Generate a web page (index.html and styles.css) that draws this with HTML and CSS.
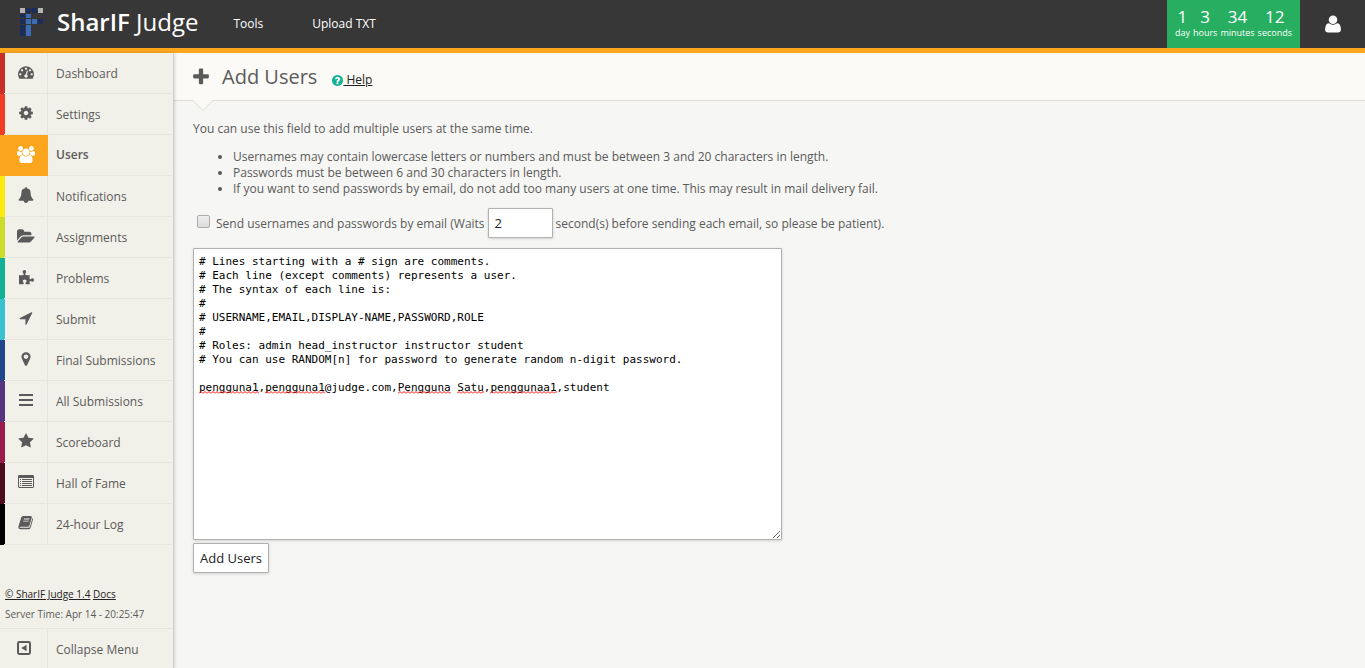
FILE: index.html
```html
<!DOCTYPE html>
<html lang="en">
<head>
<meta charset="utf-8">
<title>Add Users - SharIF Judge</title>
<link rel="stylesheet" href="styles.css">
</head>
<body>
<header class="topbar">
  <a class="brand" href="#">
    <svg class="logo" viewBox="0 0 24 28" aria-hidden="true">
      <path fill="#b5b5b5" d="M0 0h5v5H0zM18 0h5v5h-5z"/>
      <path fill="#1c2c5b" d="M6 0h5v5H6zM12 0h5v5h-5zM0 6h5v4H0zM0 11h5v5H0zM18 11h5v5h-5zM0 17h5v11H0z"/>
      <path fill="#3c6db5" d="M6 6h5v4H6zM6 11h5v5H6zM12 11h5v5h-5zM6 17h5v11H6z"/>
    </svg>
    <span class="brand-name"><b>SharIF</b> Judge</span>
  </a>
  <nav class="top-nav">
    <a href="#">Tools</a>
    <a href="#">Upload TXT</a>
  </nav>
  <div class="timer">
    <div><span class="num">1</span><span class="unit">day</span></div>
    <div><span class="num">3</span><span class="unit">hours</span></div>
    <div><span class="num">34</span><span class="unit">minutes</span></div>
    <div><span class="num">12</span><span class="unit">seconds</span></div>
  </div>
  <button class="profile" type="button" aria-label="Profile">
    <svg viewBox="0 0 1792 1792" aria-hidden="true"><path d="M1600 1405q0 120-73 189.500t-194 69.500h-874q-121 0-194-69.500t-73-189.500q0-53 3.500-103.500t14-109 26.500-108.500 43-97.500 62-81 85.500-53.500 111.500-20q9 0 42 21.500t74.500 48 108 48 133.500 21.500 133.500-21.500 108-48 74.500-48 42-21.500q61 0 111.500 20t85.500 53.500 62 81 43 97.500 26.500 108.500 14 109 3.500 103.500zm-320-893q0 159-112.500 271.500t-271.500 112.500-271.500-112.500-112.500-271.500 112.500-271.500 271.500-112.500 271.500 112.500 112.500 271.500z"/></svg>
  </button>
</header>
<div class="layout">
  <aside class="sidebar">
    <nav class="menu">
      <a class="item red" href="#"><span class="icon"><svg viewBox="0 0 1792 1792"><path d="M384 1152q0-53-37.500-90.500t-90.500-37.500-90.500 37.500-37.500 90.500 37.500 90.500 90.500 37.500 90.500-37.500 37.500-90.500zm192-448q0-53-37.500-90.500t-90.500-37.500-90.500 37.500-37.500 90.500 37.500 90.500 90.500 37.500 90.500-37.500 37.500-90.500zm428 481l101-382q6-26-7.500-48.500t-38.500-29.500-48 6.500-30 39.500l-101 382q-60 5-107 43.500t-63 98.500q-20 77 20 146t117 89 146-20 89-117q16-60-6-117t-72-91zm660-33q0-53-37.500-90.500t-90.500-37.500-90.500 37.500-37.500 90.500 37.500 90.500 90.500 37.500 90.500-37.500 37.500-90.500zm-640-640q0-53-37.500-90.500t-90.500-37.500-90.500 37.500-37.500 90.500 37.500 90.500 90.500 37.500 90.500-37.500 37.500-90.500zm448 192q0-53-37.500-90.500t-90.500-37.500-90.500 37.500-37.500 90.500 37.500 90.500 90.500 37.500 90.500-37.500 37.500-90.500zm320 448q0 261-141 483-19 29-54 29h-1402q-35 0-54-29-141-221-141-483 0-182 71-348t191-286 286-191 348-71 348 71 286 191 191 286 71 348z"/></svg></span><span class="label">Dashboard</span></a>
      <a class="item scarlet" href="#"><span class="icon"><svg viewBox="0 0 1792 1792"><path d="M1152 896q0-106-75-181t-181-75-181 75-75 181 75 181 181 75 181-75 75-181zm512-109v222q0 12-8 23t-20 13l-185 28q-19 54-39 91 35 50 107 138 10 12 10 25t-9 23q-27 37-99 108t-94 71q-12 0-26-9l-138-108q-44 23-91 38-16 136-29 186-7 28-36 28h-222q-14 0-24.500-8.500t-11.500-21.500l-28-184q-49-16-90-37l-141 107q-10 9-25 9-14 0-25-11-126-114-165-168-7-10-7-23 0-12 8-23 15-21 51-66.500t54-70.500q-27-50-41-99l-183-27q-13-2-21-12.500t-8-23.500v-222q0-12 8-23t19-13l186-28q14-46 39-92-40-57-107-138-10-12-10-24 0-10 9-23 26-36 98.500-107.500t94.500-71.500q13 0 26 10l138 107q44-23 91-38 16-136 29-186 7-28 36-28h222q14 0 24.500 8.500t11.500 21.500l28 184q49 16 90 37l142-107q9-9 24-9 13 0 25 10 129 119 165 170 7 8 7 22 0 12-8 23-15 21-51 66.500t-54 70.500q26 50 41 98l183 28q13 2 21 12.500t8 23.500z"/></svg></span><span class="label">Settings</span></a>
      <a class="item orange active" href="#" aria-current="page"><span class="icon"><svg class="wide" viewBox="0 0 1920 1792"><path d="M593 896q-162 5-265 128h-134q-82 0-138-40.500t-56-118.500q0-353 124-353 6 0 43.500 21t97.500 42.500 119 21.500q67 0 133-23-5 37-5 66 0 159 81 256zm1071 637q0 120-73 189.500t-194 69.500h-874q-121 0-194-69.500t-73-189.500q0-53 3.500-103.500t14-109 26.500-108.500 43-97.500 62-81 85.500-53.500 111.500-20q10 0 43 21.500t73 48 107 48 135 21.500 135-21.500 107-48 73-48 43-21.500q61 0 111.500 20t85.500 53.500 62 81 43 97.500 26.500 108.500 14 109 3.500 103.500zm-1024-1277q0 106-75 181t-181 75-181-75-75-181 75-181 181-75 181 75 75 181zm704 384q0 159-112.500 271.500t-271.500 112.500-271.500-112.500-112.500-271.500 112.500-271.500 271.500-112.500 271.500 112.500 112.500 271.500zm576 225q0 78-56 118.500t-138 40.500h-134q-103-123-265-128 93-134 93-256 0-29-5-66 66 23 133 23 59 0 119-21.500t97.500-42.500 43.500-21q124 0 124 353zm-128-609q0 106-75 181t-181 75-181-75-75-181 75-181 181-75 181 75 75 181z"/></svg></span><span class="label">Users</span></a>
      <a class="item yellow" href="#"><span class="icon"><svg viewBox="0 0 1792 1792"><path d="M1728 1408q0 52-38 90t-90 38h-448q0 106-75 181t-181 75-181-75-75-181h-448q-52 0-90-38t-38-90q50-42 91-88t85-119.500 74.500-158.500 50-206 19.500-260q0-152 117-282.500t307-158.500q-8-19-8-39 0-40 28-68t68-28 68 28 28 68q0 20-8 39 190 28 307 158.500t117 282.500q0 139 19.500 260t50 206 74.500 158.500 85 119.500 91 88z"/></svg></span><span class="label">Notifications</span></a>
      <a class="item lime" href="#"><span class="icon"><svg class="wide" viewBox="0 0 1920 1792"><path d="M1879 952q0 31-31 66l-336 396q-43 51-120.500 86.500t-143.500 35.500h-1088q-34 0-60.500-13t-26.500-43q0-31 31-66l336-396q43-51 120.500-86.500t143.500-35.500h1088q34 0 60.500 13t26.500 43zm-343-344v160h-832q-94 0-197 47.500t-164 119.500l-337 396-6 6v-985q0-92 66-158t158-66h320q92 0 158 66t66 158v32h544q92 0 158 66t66 158z"/></svg></span><span class="label">Assignments</span></a>
      <a class="item green" href="#"><span class="icon"><svg viewBox="0 0 16 16"><path d="M1 6q2 .6 4 .2Q6 6 5.500 4.700 4.600 3.700 4.600 2.600 4.600.900 6.400.900t1.800 1.700q0 .9-.8 2-.4 1.200.5 1.500 1.900.3 3.800-.1-.3 2-.1 3.500.2 1.100 1.300.5.800-.7 1.600-.7 1.500 0 1.500 1.700t-1.500 1.700q-.8 0-1.600-.7-1-.4-1.200.5-.3 1 .1 2.800H8.300q-.8 0-.8-.8 0-.6.600-1.200.5-.6.500-1.200 0-1.500-1.900-1.500t-1.900 1.500q0 .8.600 1.500.5.500.4 1-.1.600-1 .700H1z"/></svg></span><span class="label">Problems</span></a>
      <a class="item sky" href="#"><span class="icon"><svg viewBox="0 0 1792 1792"><path d="M1593 349l-640 1280q-17 35-57 35-5 0-15-2-22-5-35.500-22.500t-13.500-39.500v-576h-576q-22 0-39.500-13.500t-22.500-35.500 4-42 29-30l1280-640q13-7 29-7 27 0 45 19 15 14 18.500 34.500t-6.500 39.500z"/></svg></span><span class="label">Submit</span></a>
      <a class="item blue" href="#"><span class="icon"><svg viewBox="0 0 1792 1792"><path d="M1152 640q0-106-75-181t-181-75-181 75-75 181 75 181 181 75 181-75 75-181zm256 0q0 109-33 179l-364 774q-16 33-47.500 52t-67.500 19-67.500-19-46.500-52l-365-774q-33-70-33-179 0-212 150-362t362-150 362 150 150 362z"/></svg></span><span class="label">Final Submissions</span></a>
      <a class="item purple" href="#"><span class="icon"><svg viewBox="0 0 16 16"><path d="M1 2h14v2H1zM1 7h14v2H1zM1 12h14v2H1z"/></svg></span><span class="label">All Submissions</span></a>
      <a class="item crimson" href="#"><span class="icon"><svg viewBox="0 0 1792 1792"><path d="M1728 647q0 22-26 48l-363 354 86 500q1 7 1 20 0 21-10.500 35.500t-30.500 14.500q-19 0-40-12l-449-236-449 236q-22 12-40 12-21 0-31.500-14.500t-10.500-35.500q0-6 2-20l86-500-364-354q-25-27-25-48 0-37 56-46l502-73 225-455q19-41 49-41t49 41l225 455 502 73q56 9 56 46z"/></svg></span><span class="label">Scoreboard</span></a>
      <a class="item maroon" href="#"><span class="icon"><svg viewBox="0 0 16 16"><path fill-rule="evenodd" d="M1.400 1h13.200Q16 1 16 2.400v10.200q0 1.400-1.400 1.400H1.400Q0 14 0 12.600V2.400Q0 1 1.400 1zM1 4v8.600q0 .4.400.4h13.200q.4 0 .4-.4V4zM2 5h1v1H2zM4 5h10v1H4zM2 7h1v1H2zM4 7h10v1H4zM2 9h1v1H2zM4 9h10v1H4zM2 11h1v1H2zM4 11h10v1H4z"/></svg></span><span class="label">Hall of Fame</span></a>
      <a class="item black" href="#"><span class="icon"><svg viewBox="0 0 16 16"><path fill-rule="evenodd" d="M5.200 1h7.700q1.200.1.900 1.400l-2.400 8.100q-.4 1.200-1.500 1.200H2.300q-.9 0-.7.600.2.500 1 .500h8.300q.7 0 .9-.7l2.500-8.300q.1-.4.100-.7.900.5.600 1.500l-2.400 8.200q-.5 1.500-1.900 1.500H2.400Q1 14.300.5 13q-.3-.9 0-1.800L3.200 2.500Q3.800 1.100 5.200 1zM6 3.500l-.3.900h5.600l.3-.9zM5.300 5.700l-.3.900h5.600l.3-.9z"/></svg></span><span class="label">24-hour Log</span></a>
    </nav>
    <div class="side-foot">
      <p class="about"><a href="#">© SharIF Judge 1.4</a> <a href="#">Docs</a></p>
      <p class="about">Server Time: Apr 14 - 20:25:47</p>
      <button class="item collapse" type="button"><span class="icon"><svg viewBox="0 0 16 16"><path fill-rule="evenodd" d="M3.400 1h9.200q2.400 0 2.400 2.400v9.200q0 2.400-2.400 2.400H3.400Q1 15 1 12.600V3.400Q1 1 3.400 1zM3.500 3q-.5 0-.5.500v9q0 .5.500.5h9q.5 0 .5-.5v-9q0-.5-.5-.5zM10.600 4.700v6.600L5.300 8z"/></svg></span><span class="label">Collapse Menu</span></button>
    </div>
  </aside>
  <main class="main">
    <div class="page-head">
      <svg class="plus" viewBox="0 0 1792 1792" aria-hidden="true"><path d="M1600 736v192q0 40-28 68t-68 28h-416v416q0 40-28 68t-68 28h-192q-40 0-68-28t-28-68v-416h-416q-40 0-68-28t-28-68v-192q0-40 28-68t68-28h416v-416q0-40 28-68t68-28h192q40 0 68 28t28 68v416h416q40 0 68 28t28 68z"/></svg>
      <h1>Add Users</h1>
      <a class="help" href="#"><svg viewBox="128 128 1536 1536" aria-hidden="true"><path d="M1024 1376v-192q0-14-9-23t-23-9h-192q-14 0-23 9t-9 23v192q0 14 9 23t23 9h192q14 0 23-9t9-23zm256-672q0-88-55.500-163t-138.500-116-170-41q-243 0-371 213-15 24 8 42l132 100q7 6 19 6 16 0 25-12 53-68 86-92 34-24 86-24 48 0 85.500 26t37.500 59q0 38-20 61t-68 45q-63 28-115.500 86.500t-52.500 125.500v36q0 14 9 23t23 9h192q14 0 23-9t9-23q0-19 21.500-49.500t54.500-49.500q32-18 49-28.500t46-35 44.500-48 28-60.500 12.500-81zm384 192q0 209-103 385.500t-279.500 279.500-385.500 103-385.500-103-279.500-279.500-103-385.500 103-385.500 279.500-279.500 385.500-103 385.500 103 279.500 279.500 103 385.500z"/></svg> Help</a>
      <svg class="notch" viewBox="0 0 20 11" aria-hidden="true"><path fill="#fbfaf6" d="M0 0h20L10 10z"/><path fill="none" stroke="#deddd5" d="M0 .5l10 10 10-10"/></svg>
    </div>
    <form class="content">
      <p class="intro">You can use this field to add multiple users at the same time.</p>
      <ul class="notes">
        <li>Usernames may contain lowercase letters or numbers and must be between 3 and 20 characters in length.</li>
        <li>Passwords must be between 6 and 30 characters in length.</li>
        <li>If you want to send passwords by email, do not add too many users at one time. This may result in mail delivery fail.</li>
      </ul>
      <div class="mail-row">
        <input type="checkbox" id="send-mail" class="check">
        <label for="send-mail">Send usernames and passwords by email (Waits</label>
        <input type="text" id="delay" class="field delay" value="2">
        <label for="delay">second(s) before sending each email, so please be patient).</label>
      </div>
      <div class="editor">
        <textarea class="field" aria-label="New users" spellcheck="false">
# Lines starting with a # sign are comments.
# Each line (except comments) represents a user.
# The syntax of each line is:
#
# USERNAME,EMAIL,DISPLAY-NAME,PASSWORD,ROLE
#
# Roles: admin head_instructor instructor student
# You can use RANDOM[n] for password to generate random n-digit password.

pengguna1,pengguna1@judge.com,Pengguna Satu,penggunaa1,student</textarea>
        <div class="spelling" aria-hidden="true"><i class="w9"></i><i class="w9"></i><i class="w8"></i><i class="w4"></i><i class="w10"></i></div>
      </div>
      <button class="field submit" type="submit">Add Users</button>
    </form>
  </main>
</div>
</body>
</html>
```

FILE: styles.css
```css
* { box-sizing: border-box; }

body {
  margin: 0;
  min-height: 100vh;
  display: flex;
  flex-direction: column;
  background: #f6f6f4;
  color: #5a5a5a;
  font: 12px/16px "Open Sans", sans-serif;
}

a { color: inherit; }
p, ul, h1 { margin: 0; }
svg { display: block; fill: currentColor; }
button, input, textarea { font: inherit; color: inherit; }

.topbar {
  display: flex;
  flex: none;
  height: 53px;
  background: #373737;
  border-bottom: 5px solid #fca61e;
  color: #fff;
}
.topbar a { text-decoration: none; }
.brand {
  display: flex;
  align-items: center;
  gap: 13px;
  padding-left: 20px;
}
.logo { width: 24px; height: 28px; margin-bottom: 4px; }
.brand-name { font-size: 24px; line-height: 32px; margin-bottom: 4px; }
.brand-name b { font-weight: 600; }
.top-nav {
  display: flex;
  align-items: center;
  gap: 49px;
  padding-left: 35px;
}
.timer {
  display: flex;
  gap: 3px;
  margin-left: auto;
  padding: 7px 8px 0;
  background: #27ae60;
  text-align: center;
}
.timer span { display: block; }
.num { font-size: 17px; line-height: 20px; }
.unit { font-size: 9px; line-height: 12px; }
.profile {
  width: 65px;
  border: 0;
  padding: 0;
  background: none;
  display: flex;
  align-items: center;
  justify-content: center;
}
.profile svg { width: 20px; height: 20px; }

.layout { display: flex; flex: 1; }

.sidebar {
  display: flex;
  flex-direction: column;
  flex: none;
  width: 174px;
  background: #f2f1e9;
  border-right: 1px solid #cfcfcb;
  box-shadow: 1px 0 3px rgba(0, 0, 0, .15);
  z-index: 1;
}
.menu { padding-right: 1px; }
.item {
  display: flex;
  height: 41px;
  border: 0 solid #e7e6dc;
  border-bottom-width: 1px;
  text-decoration: none;
}
.icon {
  display: flex;
  align-items: center;
  justify-content: center;
  width: 48px;
  padding: 0 0 2px 5px;
  border-right: 1px solid #e7e6dc;
  box-shadow: inset 5px 0 var(--strip);
}
.icon svg { width: 16px; height: 16px; }
.icon .wide { width: 18px; height: 17px; }
.menu .item {
  border-image: linear-gradient(to right, var(--strip) 5px, #e7e6dc 5px) 1;
}
.label { padding: 13px 0 0 8px; font-size: 12px; }
.active .icon {
  background: #fca61e;
  border-color: #fca61e;
  color: #fff;
  box-shadow: 0 1px #fca61e;
}
.active .label { padding-top: 12px; font-weight: 600; }

.red { --strip: #c72f29; }
.scarlet { --strip: #f03c24; }
.orange { --strip: #fca61e; }
.yellow { --strip: #fbe80c; }
.lime { --strip: #cddb2a; }
.green { --strip: #11b295; }
.sky { --strip: #39c2cf; }
.blue { --strip: #21468b; }
.purple { --strip: #573480; }
.crimson { --strip: #9b1b4c; }
.maroon { --strip: #4e0b1c; }
.black { --strip: #000; }

.side-foot { margin-top: auto; }
.about { padding-left: 5px; font-size: 10px; line-height: 20px; }
.about a { color: #222; }
.collapse {
  width: 100%;
  height: 40px;
  margin-top: 4px;
  padding: 0;
  border-width: 1px 0 0;
  background: none;
  text-align: left;
}
.collapse .icon { padding-left: 0; box-shadow: none; }

.main { flex: 1; min-width: 0; }
.page-head {
  position: relative;
  display: flex;
  align-items: center;
  height: 48px;
  padding-left: 17px;
  background: #fbfaf6;
  border-bottom: 1px solid #deddd5;
}
.plus { width: 20px; height: 20px; }
h1 { margin-left: 11px; font-size: 20px; line-height: 28px; font-weight: 400; }
.help { margin: 6px 0 0 15px; color: #222; }
.help svg {
  display: inline-block;
  width: 11px;
  height: 11px;
  vertical-align: -2px;
  color: #11b295;
}
.notch {
  position: absolute;
  left: 19px;
  top: 47px;
  width: 20px;
  height: 11px;
}

.content { padding: 20px 19px 0; }
.notes { margin-top: 12px; padding-left: 40px; }
.mail-row { display: flex; align-items: center; gap: 3px; margin-top: 11px; }
.mail-row label { padding-top: 1px; }
.check {
  appearance: none;
  width: 13px;
  height: 13px;
  margin: 0 3px 4px 4px;
  border: 1px solid #adadad;
  border-radius: 2px;
  background: linear-gradient(#eee, #dcdcdc);
}
.field {
  border: 1px solid #b0b0b0;
  border-radius: 1px;
  background: #fff;
  color: #222;
  box-shadow: 0 1px 3px rgba(0, 0, 0, .15);
}
.delay { width: 65px; height: 30px; padding: 0 6px; font-size: 13px; }
.editor { position: relative; margin-top: 10px; }
textarea {
  display: block;
  width: 589px;
  max-width: 100%;
  height: 292px;
  padding: 6px 5px 5px;
}
textarea.field { color: #000; }
textarea, .spelling { font: 11px/14px "DejaVu Sans Mono", monospace; }
.spelling {
  position: absolute;
  left: 6px;
  top: 143px;
  display: flex;
  gap: 1ch;
  pointer-events: none;
}
.spelling i {
  height: 3px;
  background: url("data:image/svg+xml,%3Csvg xmlns='http://www.w3.org/2000/svg' width='4' height='3'%3E%3Cpath d='M0 2.500L2 .5L4 2.500' fill='none' stroke='red'/%3E%3C/svg%3E");
}
.w9 { width: 9ch; }
.w8 { width: 8ch; }
.w4 { width: 4ch; }
.w10 { width: 10ch; }
.w9 + .w8 { margin-left: 10ch; }
.submit { height: 30px; margin-top: 3px; padding: 0 6px; font-size: 13px; }
```
